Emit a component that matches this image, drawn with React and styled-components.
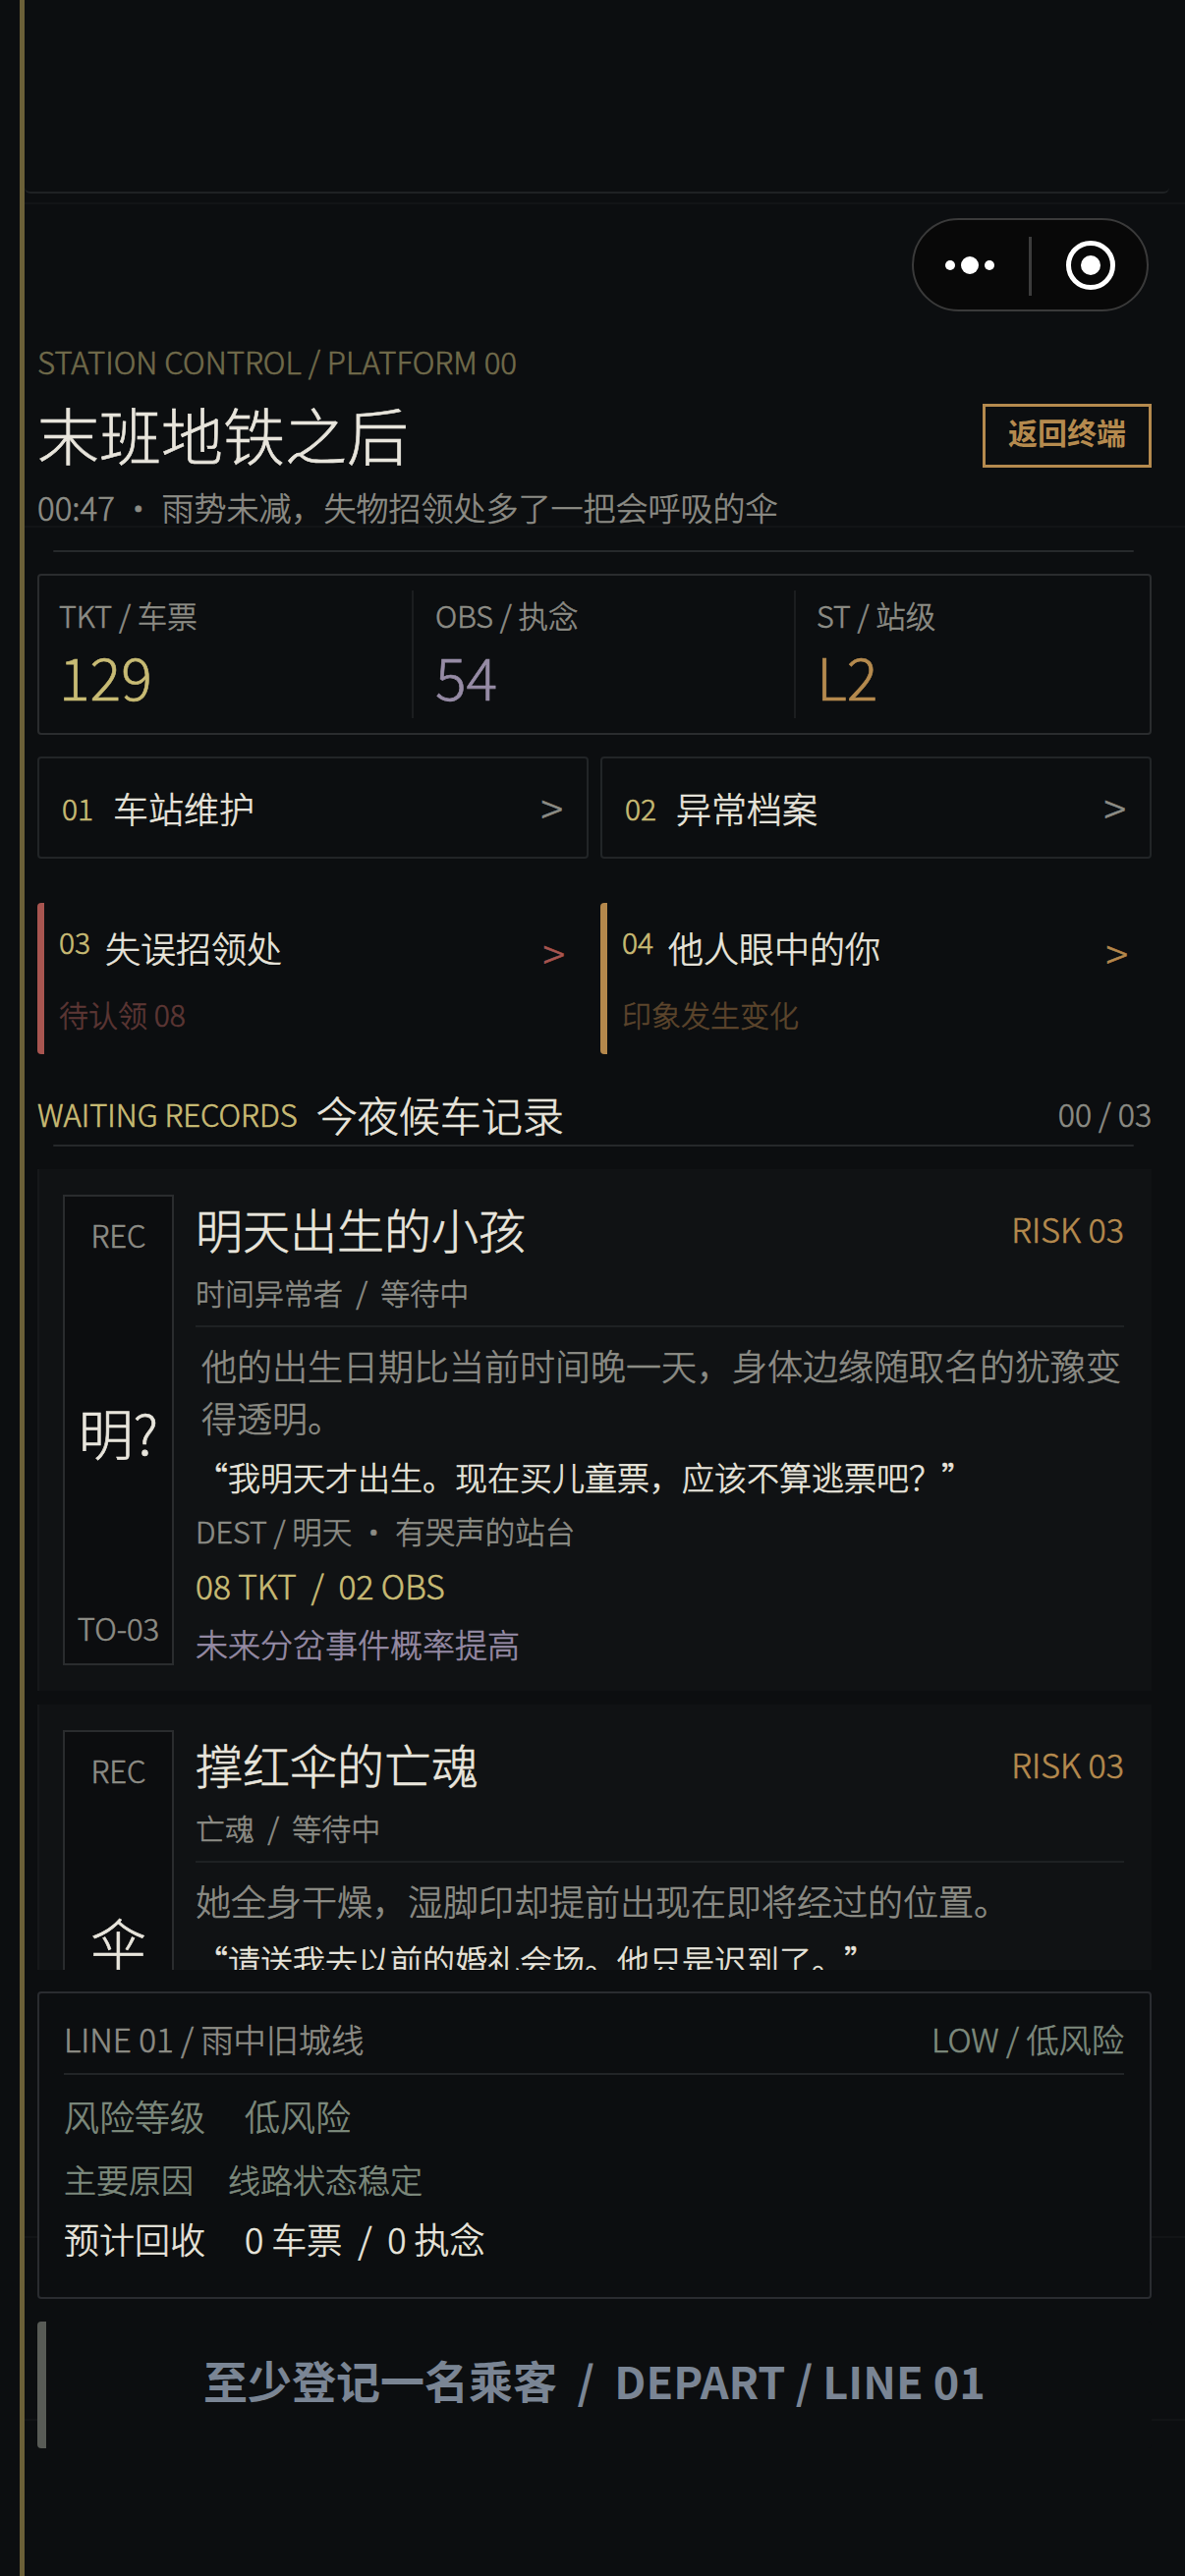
import React from "react";
import styled, { createGlobalStyle } from "styled-components";

const Global = createGlobalStyle`
  html, body { margin: 0; padding: 0; background: #0c0e10; }
  * { box-sizing: border-box; }
`;

const Page = styled.div`
  position: relative;
  width: 1206px;
  height: 2622px;
  overflow: hidden;
  padding: 0 34px 0 38px;
  background: #0c0e10;
  color: #e8e5dc;
  font-family: "Noto Sans CJK SC", "Noto Sans", sans-serif;
  font-weight: 300;
  -webkit-text-stroke: 0.6px currentColor;
  white-space: pre-wrap;
  text-spacing-trim: space-all;
`;
const GoldLine = styled.div`
  position: absolute; left: 20px; top: 0; bottom: 0; width: 5px; background: #6b6038;
`;
const Scan = styled.div`
  position: absolute; left: 25px; right: 0; height: 2px; background: #121416;
  top: ${p => p.$y}px;
`;
const StatusBar = styled.div`
  position: relative;
  height: 197px;
  margin: 0 -18px 0 -13px;
  border-bottom: 2px solid #1f2224;
  border-radius: 0 0 6px 6px;
`;
const CapsuleRow = styled.div`
  position: relative;
  display: flex; justify-content: flex-end; margin: 25px 3px 0 0;
`;
const Capsule = styled.div`
  width: 241px; height: 95px; border-radius: 48px;
  border: 2px solid #3a3a3a; background: #080808;
  display: flex; align-items: center;
`;
const CapsuleSvg = styled.svg`display: block;`;
const Label = styled.div`
  position: relative;
  margin-top: 31px; font-size: 31.2px; line-height: 40px; color: #706a4a;
`;
const TitleRow = styled.div`
  position: relative;
  display: flex; align-items: center; justify-content: space-between;
  margin-top: 23px; height: 65px;
`;
const Title = styled.h1`
  margin: -6px 0 0; font-size: 63px; line-height: 65px; font-weight: 300; color: #e8e5dc;
`;
const BackBtn = styled.div`
  width: 172px; height: 65px; border: 3px solid #b58a4e; color: #b58a4e;
  padding-bottom: 10px;
  font-size: 30px; font-weight: 700; -webkit-text-stroke: 0;
  display: flex; align-items: center; justify-content: center;
`;
const Subtitle = styled.div`
  position: relative;
  margin-top: 20px; font-size: 33px; line-height: 40px; color: #8c8c85;
`;
const Rule = styled.div`
  position: relative;
  height: 2px; background: #26292b; margin: ${p => p.$top || 0}px 18px 0 16px; border-radius: 2px;
`;
const Stats = styled.div`
  position: relative;
  margin-top: 22px; height: 164px; border: 2px solid #2a2c2e; border-radius: 4px;
  padding: 15px 0; display: grid; grid-template-columns: 379px 389px 1fr;
`;
const Stat = styled.div`
  padding-left: ${p => p.$pad}px;
  border-left: ${p => (p.$first ? "none" : "2px solid #1b1d1f")};
`;
const StatLabel = styled.div`
  margin-top: 5px; font-size: 30.5px; line-height: 40px; color: #8c8c85;
`;
const StatValue = styled.div`
  margin-top: 7px; font-size: 59px; line-height: 70px; color: ${p => p.$c};
`;
const Grid = styled.div`
  position: relative;
  display: grid; grid-template-columns: 561px 561px; column-gap: 12px;
  margin-top: ${p => p.$top}px;
`;
const NavCell = styled.div`
  height: 104px; border: 2px solid #222527; border-radius: 4px;
  padding: 0 24px 0 23px; display: flex; align-items: center;
`;
const Num = styled.span`
  font-size: 30px; color: #c8bb74; margin-right: ${p => p.$gap}px;
`;
const NavName = styled.span`
  font-size: 36px; color: #e8e5dc;
`;
const Arrow = styled.span`
  margin-left: auto; font-size: 42px; line-height: 50px; margin-top: -2px; color: ${p => p.$c};
`;
const FeatCell = styled.div`
  height: 154px; border-left: 7px solid ${p => p.$c}; border-radius: 4px 0 0 4px;
  padding: 16px 24px 0 15px;
`;
const FeatTop = styled.div`
  display: flex; align-items: flex-start; height: 68px;
`;
const FeatNum = styled.span`
  font-size: 30px; line-height: 46px; color: #c8bb74; margin-right: 15px;
`;
const FeatName = styled.span`
  font-size: 36px; line-height: 58px; color: #e8e5dc;
`;
const FeatArrow = styled.span`
  margin-left: auto; font-size: 42px; line-height: 68px; color: ${p => p.$c};
`;
const FeatSub = styled.div`
  margin-top: 9px; font-size: 30px; line-height: 40px; color: ${p => p.$c};
`;
const SectionHead = styled.div`
  position: relative;
  margin-top: 32px; height: 56px; display: flex; align-items: center; 
`;
const SectionEn = styled.span`
  font-size: 31px; color: #c8bb74; margin-right: 19px;
`;
const SectionCn = styled.span`
  font-size: 42px; color: #e8e5dc;
`;
const SectionCount = styled.span`
  margin-left: auto; font-size: 32px; color: #8c8c85;
`;
const List = styled.div`
  position: relative;
  margin-top: 23px; height: 815px; overflow: hidden;
`;
const Card = styled.div`
  background: #101214; padding: 26px 28px 26px 26px; display: flex; gap: 22px;
  margin-bottom: 14px; border-left: 2px solid #16181a;
`;
const Stub = styled.div`
  width: 113px; flex: none; margin-left: -2px; border: 2px solid #2a2c2e; background: #0c0d0f;
  padding: 19px 0 16px; display: flex; flex-direction: column; align-items: center; justify-content: space-between;
`;
const StubSmall = styled.div`
  font-size: 31px; line-height: 40px; color: #8c8c85; white-space: nowrap;
`;
const StubBig = styled.div`
  font-size: 56px; line-height: 70px; color: #e8e5dc; white-space: nowrap;
`;
const Body = styled.div`
  flex: 1; min-width: 0; padding-top: 4px;
`;
const CardHead = styled.div`
  display: flex; align-items: center; justify-content: space-between; height: 60px;
`;
const CardTitle = styled.div`
  font-size: 48px; color: #e8e5dc;
`;
const Risk = styled.div`
  font-size: 34px; color: #b58a4e;
`;
const Meta = styled.div`
  margin-top: ${p => p.$top}px; font-size: ${p => p.$fs || 30}px; line-height: 40px; color: #8c8c85;
`;
const CardRule = styled.div`
  margin-top: 14px; height: 2px; background: #1e2123;
`;
const Desc = styled.div`
  margin-top: 12px; font-size: 36px; line-height: 53px; color: #8c8c85;
  padding-left: ${p => p.$indent || 0}px;
`;
const Quote = styled.div`
  margin-top: 12px; font-size: 33px; line-height: 44px; color: #e8e5dc;
`;
const Reward = styled.div`
  margin-top: 14px; font-size: 33.5px; line-height: 44px; color: #c8bb74;
`;
const Fate = styled.div`
  margin-top: 15px; font-size: 33px; line-height: 44px; color: #968ba5;
`;
const Panel = styled.div`
  position: relative;
  margin-top: 22px; height: 313px; border: 2px solid #2a2c30; border-radius: 4px;
  padding: 24px 26px 0 25px; background: #0c0e10;
`;
const PanelHead = styled.div`
  display: flex; justify-content: space-between; font-size: 33.2px; line-height: 44px;
  padding-bottom: 13px; border-bottom: 2px solid #222527; color: #8c8c85;
`;
const PanelLow = styled.span`
  color: #7d8a7d;
`;
const PanelRow = styled.div`
  display: flex; margin-top: ${p => p.$top}px; line-height: ${p => p.$lh}px;
  font-size: ${p => p.$fs}px; color: ${p => p.$c}; gap: ${p => p.$gap}px;
`;
const Depart = styled.div`
  position: relative;
  margin-top: 23px; height: 129px; border-left: 9px solid #585b56; border-radius: 4px;
  padding: 0 9px 10px 0; display: flex; align-items: center; justify-content: center;
  font-size: 45px; font-weight: 700; -webkit-text-stroke: 0; color: #7a8594; white-space: pre; background: #0c0e10;
`;

function RecordCard({ rec, title, sub, desc, indent, quote, dest, reward, fate }) {
  return (
    <Card>
      <Stub>
        <StubSmall>REC</StubSmall>
        <StubBig>{rec}</StubBig>
        <StubSmall>TO-03</StubSmall>
      </Stub>
      <Body>
        <CardHead>
          <CardTitle>{title}</CardTitle>
          <Risk>RISK 03</Risk>
        </CardHead>
        <Meta $top={15}>{sub}</Meta>
        <CardRule />
        <Desc $indent={indent}>{desc}</Desc>
        <Quote>{quote}</Quote>
        <Meta $top={13} $fs={30.5}>{dest}</Meta>
        <Reward>{reward}</Reward>
        <Fate>{fate}</Fate>
      </Body>
    </Card>
  );
}

export default function App() {
  return (
    <Page>
      <Global />
      <GoldLine />
      <Scan $y={206} />
      <Scan $y={535} />
      <Scan $y={2276} />
      <Scan $y={2462} />
      <StatusBar />
      <CapsuleRow>
        <Capsule>
          <CapsuleSvg width="237" height="91" viewBox="0 0 237 91">
            <circle cx="37" cy="46" r="5" fill="#fff" />
            <circle cx="57" cy="46" r="9" fill="#fff" />
            <circle cx="77" cy="46" r="5" fill="#fff" />
            <rect x="117" y="17" width="3" height="60" fill="#3c3c3c" />
            <circle cx="180" cy="46" r="22.5" fill="none" stroke="#fff" strokeWidth="5" />
            <circle cx="180" cy="46" r="10" fill="#fff" />
          </CapsuleSvg>
        </Capsule>
      </CapsuleRow>
      <Label>STATION CONTROL / PLATFORM 00</Label>
      <TitleRow>
        <Title>末班地铁之后</Title>
        <BackBtn>返回终端</BackBtn>
      </TitleRow>
      <Subtitle>00:47 · 雨势未减，失物招领处多了一把会呼吸的伞</Subtitle>
      <Rule $top={24} />
      <Stats>
        <Stat $first $pad={20}>
          <StatLabel>TKT / 车票</StatLabel>
          <StatValue $c="#c8bb74">129</StatValue>
        </Stat>
        <Stat $pad={22}>
          <StatLabel>OBS / 执念</StatLabel>
          <StatValue $c="#968ba5">54</StatValue>
        </Stat>
        <Stat $pad={21}>
          <StatLabel>ST / 站级</StatLabel>
          <StatValue $c="#b58a4e">L2</StatValue>
        </Stat>
      </Stats>
      <Grid $top={22}>
        <NavCell>
          <Num $gap={20}>01</Num>
          <NavName>车站维护</NavName>
          <Arrow $c="#8c8c85">&gt;</Arrow>
        </NavCell>
        <NavCell>
          <Num $gap={20}>02</Num>
          <NavName>异常档案</NavName>
          <Arrow $c="#8c8c85">&gt;</Arrow>
        </NavCell>
      </Grid>
      <Grid $top={45}>
        <FeatCell $c="#a85550">
          <FeatTop>
            <FeatNum>03</FeatNum>
            <FeatName>失误招领处</FeatName>
            <FeatArrow $c="#a85550">&gt;</FeatArrow>
          </FeatTop>
          <FeatSub $c="#5c3634">待认领 08</FeatSub>
        </FeatCell>
        <FeatCell $c="#b5884c">
          <FeatTop>
            <FeatNum>04</FeatNum>
            <FeatName>他人眼中的你</FeatName>
            <FeatArrow $c="#b5884c">&gt;</FeatArrow>
          </FeatTop>
          <FeatSub $c="#5c452c">印象发生变化</FeatSub>
        </FeatCell>
      </Grid>
      <SectionHead>
        <SectionEn>WAITING RECORDS</SectionEn>
        <SectionCn>今夜候车记录</SectionCn>
        <SectionCount>00 / 03</SectionCount>
      </SectionHead>
      <Rule $top={4} />
      <List>
        <RecordCard
          rec="明?"
          title="明天出生的小孩"
          sub="时间异常者  /  等待中"
          desc="他的出生日期比当前时间晚一天，身体边缘随取名的犹豫变得透明。"
          indent={6}
          quote="“我明天才出生。现在买儿童票，应该不算逃票吧？”"
          dest="DEST / 明天 · 有哭声的站台"
          reward="08 TKT  /  02 OBS"
          fate="未来分岔事件概率提高"
        />
        <RecordCard
          rec="伞"
          title="撑红伞的亡魂"
          sub="亡魂  /  等待中"
          desc="她全身干燥，湿脚印却提前出现在即将经过的位置。"
          quote="“请送我去以前的婚礼会场。他只是迟到了。”"
          dest="DEST / 旧礼堂 · 雨中的站台"
          reward="06 TKT  /  04 OBS"
          fate="雨势事件概率提高"
        />
      </List>
      <Panel>
        <PanelHead>
          <span>LINE 01 / 雨中旧城线</span>
          <PanelLow>LOW / 低风险</PanelLow>
        </PanelHead>
        <PanelRow $top={16} $lh={50} $fs={36} $c="#7d8a7d" $gap={40}>
          <span>风险等级</span>
          <span>低风险</span>
        </PanelRow>
        <PanelRow $top={18} $lh={44} $fs={33} $c="#7d8a7d" $gap={35}>
          <span>主要原因</span>
          <span>线路状态稳定</span>
        </PanelRow>
        <PanelRow $top={13} $lh={50} $fs={36} $c="#e8e5dc" $gap={40}>
          <span>预计回收</span>
          <span>0 车票  /  0 执念</span>
        </PanelRow>
      </Panel>
      <Depart>至少登记一名乘客  /  DEPART / LINE 01</Depart>
    </Page>
  );
}
